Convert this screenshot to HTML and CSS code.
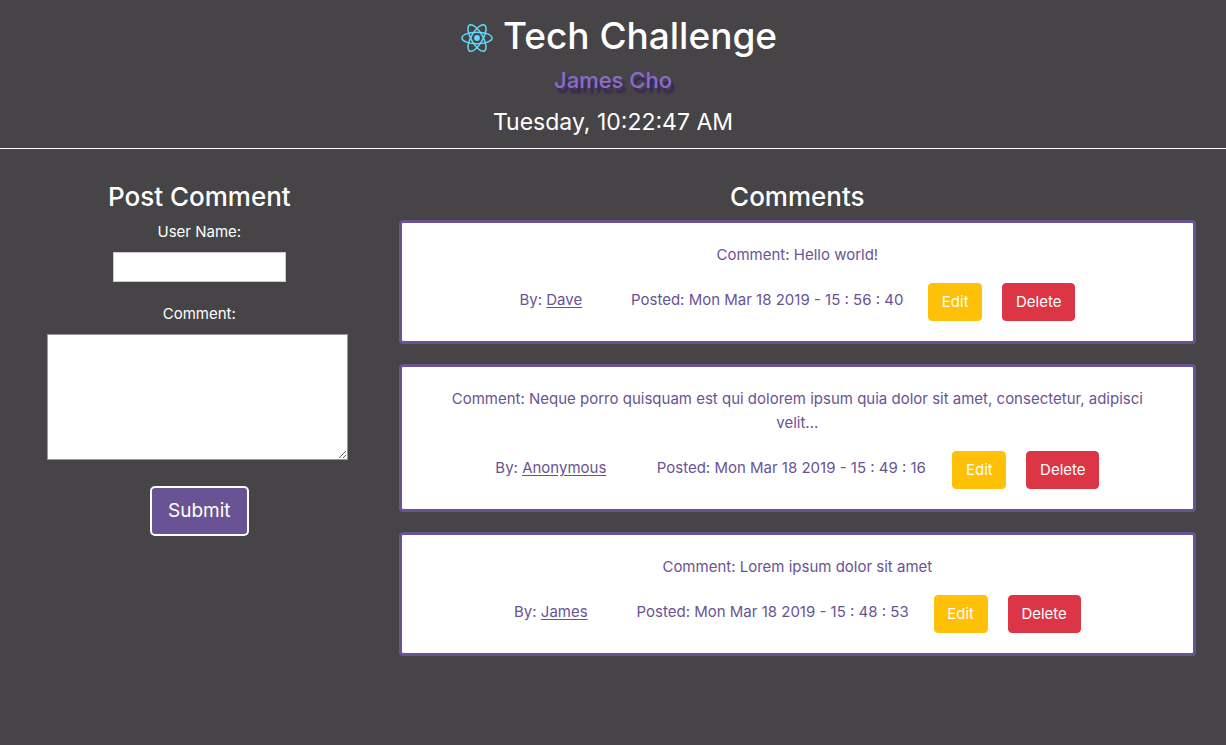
FILE: index.html
```html
<!DOCTYPE html>
<html lang="en">
<head>
<meta charset="utf-8">
<meta name="viewport" content="width=device-width, initial-scale=1">
<title>Tech Challenge</title>
<link rel="stylesheet" href="styles.css">
</head>
<body>
<header class="header">
  <h1 class="title">
    <svg class="logo" viewBox="0 0 32 30" fill="none" stroke="#61dafb" stroke-width="1.5" aria-hidden="true">
      <circle cx="16" cy="15" r="2.9" fill="#61dafb" stroke="none"/>
      <ellipse cx="16" cy="15" rx="15" ry="5.8"/>
      <ellipse cx="16" cy="15" rx="15" ry="5.8" transform="rotate(60 16 15)"/>
      <ellipse cx="16" cy="15" rx="15" ry="5.8" transform="rotate(120 16 15)"/>
    </svg>
    <span>Tech Challenge</span>
  </h1>
  <h2 class="author">James Cho</h2>
  <p class="clock">Tuesday, 10:22:47 AM</p>
</header>
<main class="layout">
  <section class="post">
    <h3 class="heading">Post Comment</h3>
    <form class="form">
      <label class="label" for="user">User Name:</label>
      <input class="input" id="user" type="text">
      <label class="label" for="comment">Comment:</label>
      <textarea class="textarea" id="comment"></textarea>
      <button class="submit" type="button">Submit</button>
    </form>
  </section>
  <section class="comments">
    <h3 class="heading">Comments</h3>
    <div class="list">
      <article class="card">
        <p class="text">Comment: Hello world!</p>
        <div class="meta">
          <span class="by">By: <u>Dave</u></span>
          <span class="posted">Posted: Mon Mar 18 2019 - 15 : 56 : 40</span>
          <button class="btn edit" type="button">Edit</button>
          <button class="btn delete" type="button">Delete</button>
        </div>
      </article>
      <article class="card">
        <p class="text">Comment: Neque porro quisquam est qui dolorem ipsum quia dolor sit amet, consectetur, adipisci velit...</p>
        <div class="meta">
          <span class="by">By: <u>Anonymous</u></span>
          <span class="posted">Posted: Mon Mar 18 2019 - 15 : 49 : 16</span>
          <button class="btn edit" type="button">Edit</button>
          <button class="btn delete" type="button">Delete</button>
        </div>
      </article>
      <article class="card">
        <p class="text">Comment: Lorem ipsum dolor sit amet</p>
        <div class="meta">
          <span class="by">By: <u>James</u></span>
          <span class="posted">Posted: Mon Mar 18 2019 - 15 : 48 : 53</span>
          <button class="btn edit" type="button">Edit</button>
          <button class="btn delete" type="button">Delete</button>
        </div>
      </article>
    </div>
  </section>
</main>
</body>
</html>
```

FILE: styles.css
```css
* { box-sizing: border-box; }

body {
  margin: 0;
  background: #464446;
  color: #fff;
  font-family: Inter, "Liberation Sans", sans-serif;
  font-size: 15px;
  line-height: 24px;
  text-align: center;
}

h1, h2, h3, p { margin: 0; font-weight: 500; }

.header {
  padding: 12px 0 8px;
  border-bottom: 1px solid #fff;
}

.title {
  display: flex;
  justify-content: center;
  align-items: center;
  gap: 10px;
  padding-left: 12px;
  font-size: 37px;
  line-height: 48px;
}

.logo { width: 32px; height: 30px; margin-top: 4px; }

.author {
  margin-top: 6px;
  color: #8d6bcb;
  font-size: 22px;
  line-height: 28px;
  text-shadow: 3px 5px 2px #352256;
}

.clock {
  margin-top: 10px;
  font-size: 23px;
  font-weight: 400;
  line-height: 36px;
}

.layout {
  display: grid;
  grid-template-columns: 1fr 2fr;
  padding: 31px 30px 30px 0;
}

.heading {
  margin-bottom: 6px;
  font-size: 26px;
  line-height: 34px;
}

.form {
  display: flex;
  flex-direction: column;
  align-items: center;
}

.label { margin-bottom: 8px; }

.input, .textarea {
  background: #fff;
  border: 1px solid #ccc;
  border-radius: 0;
  font: inherit;
}

.input { width: 173px; height: 30px; margin-bottom: 20px; padding: 2px 4px; }

.textarea { width: 301px; height: 126px; margin: 0 4px 26px 0; border-color: #999; }

.submit {
  padding: 8px 16px;
  background: #6a5394;
  border: 2px solid #fff;
  border-radius: 5px;
  color: #fff;
  font: inherit;
  font-size: 19px;
  line-height: 30px;
}

.list { display: grid; gap: 20px; }

.card {
  padding: 20px 32px;
  background: #fff;
  border: 3px solid #6a5394;
  border-radius: 4px;
  color: #6a5394;
}

.text { margin-bottom: 16px; font-weight: 400; }

.meta {
  display: flex;
  justify-content: center;
  align-items: center;
  gap: 20px;
}

.by, .posted { padding-bottom: 4px; }

.by { margin-right: 24px; }

.posted { min-width: 282px; }

u { text-underline-offset: 2px; }

.btn {
  padding: 6px 12px;
  border: 1px solid transparent;
  border-radius: 4px;
  color: #fff;
  font: inherit;
}

.edit { min-width: 54px; background-color: #ffc107; border-color: #ffc107; }

.delete { min-width: 73px; background-color: #dc3545; border-color: #dc3545; }
```
